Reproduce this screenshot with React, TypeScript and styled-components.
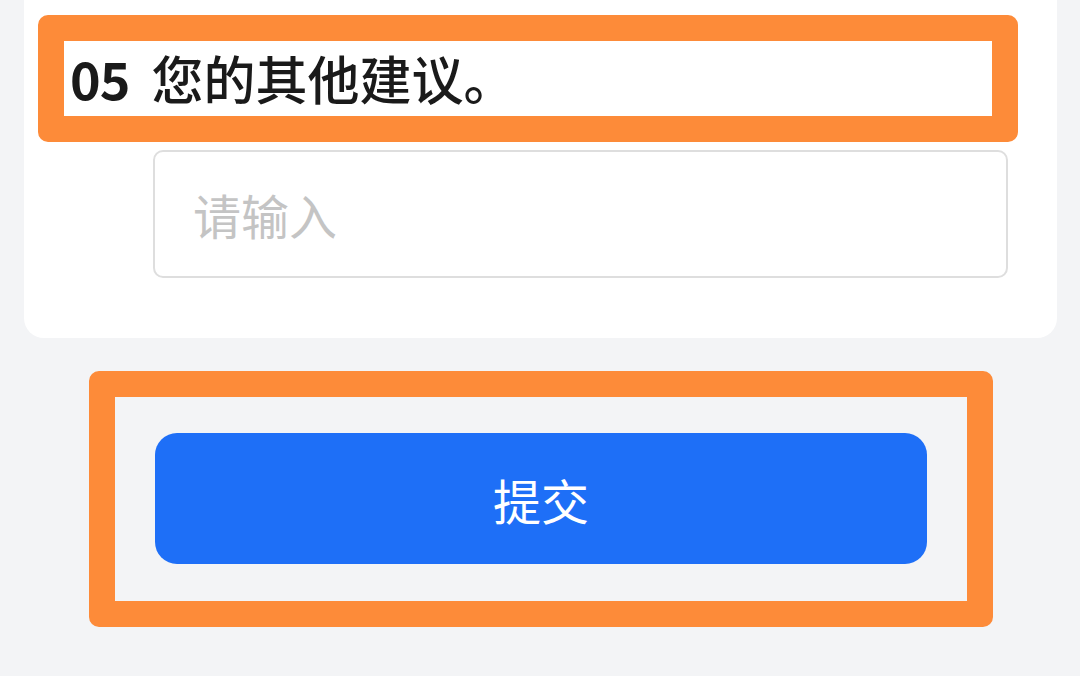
import React from 'react'
import styled, { createGlobalStyle } from 'styled-components'

const GlobalStyle = createGlobalStyle`
    html, body {
        margin: 0;
        padding: 0;
        background: #f3f4f6;
        font-family: "Noto Sans CJK SC", "Noto Sans", sans-serif;
    }
`

export default function App() {
    return (
        <Page>
            <GlobalStyle />
            <Card>
                <Highlight width={980}>
                    <Question>
                        <Num>05</Num>您的其他建议。
                    </Question>
                </Highlight>
                <Input placeholder="请输入" />
            </Card>
            <Footer>
                <Highlight width={904}>
                    <ButtonArea>
                        <SubmitButton>提交</SubmitButton>
                    </ButtonArea>
                </Highlight>
            </Footer>
        </Page>
    )
}

const Page = styled.div`
    min-height: 676px;
    background: #f3f4f6;
    padding: 0 23px 0 24px;
    box-sizing: border-box;
`

const Card = styled.div`
    background: #fff;
    border-radius: 0 0 20px 20px;
    padding: 15px 49px 60px 14px;
    display: flex;
    flex-direction: column;
    align-items: flex-start;
`

const Highlight = styled.div<{ width: number }>`
    width: ${({ width }) => width}px;
    box-sizing: border-box;
    border: 26px solid #fd8b39;
    border-radius: 10px;
`

const Question = styled.div`
    height: 75px;
    display: flex;
    align-items: center;
    padding: 0 0 2px 6px;
    box-sizing: border-box;
    font-size: 52px;
    font-weight: 500;
    color: #1a1a1a;
`

const Num = styled.span`
    margin-right: 22px;
    font-weight: 700;
    letter-spacing: -1px;
`

const Input = styled.input`
    margin: 8px 0 0 115px;
    align-self: stretch;
    height: 128px;
    box-sizing: border-box;
    border: 2px solid #dedede;
    border-radius: 10px;
    padding: 0 38px;
    font-family: "Noto Sans CJK SC", sans-serif;
    font-size: 48px;
    outline: none;
    background: #fff;

    &::placeholder {
        color: #c4c4c4;
    }
`

const Footer = styled.div`
    padding: 33px 0 0 65px;
`

const ButtonArea = styled.div`
    padding: 36px 40px 37px;
    background: #f3f4f6;
`

const SubmitButton = styled.button`
    width: 100%;
    height: 131px;
    border: none;
    border-radius: 22px;
    background: #1e6ff7;
    color: #fff;
    font-family: "Noto Sans CJK SC", sans-serif;
    font-size: 48px;
    font-weight: 400;
    display: flex;
    align-items: center;
    justify-content: center;
`
